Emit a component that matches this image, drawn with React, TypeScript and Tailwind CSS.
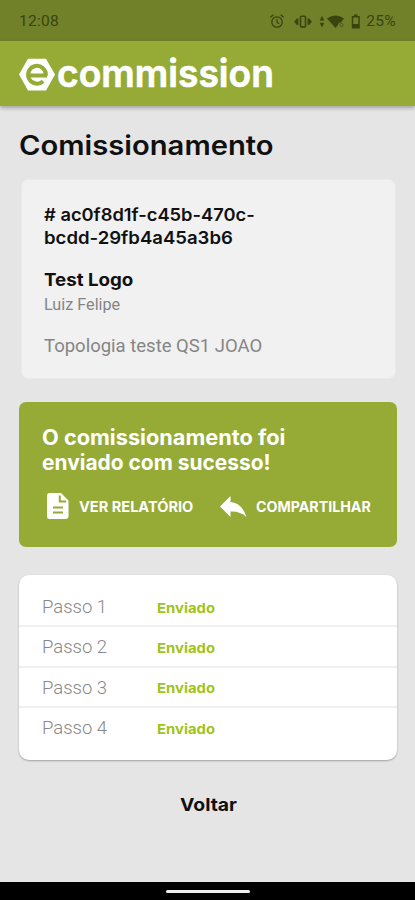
import React from 'react';

const steps = ['Passo 1', 'Passo 2', 'Passo 3', 'Passo 4'];

function StatusBar() {
  return (
    <div className="flex h-[41px] items-center bg-[#70812a] pl-[19px] pr-[19px] pt-[2px] text-[#39440f]">
      <span className="text-[15.5px] leading-none tracking-[0.3px]">12:08</span>
      <svg className="ml-auto" width="104" height="18" viewBox="0 0 104 18" fill="none" stroke="currentColor">
        <circle cx="8" cy="9" r="5.2" strokeWidth="1.3" />
        <path d="M8 6v3.3l2.3 1.4M1.4 4.3l3-2.6M14.6 4.3l-3-2.600" strokeWidth="1.2" />
        <rect x="31.5" y="3.3" width="5" height="10.6" rx="1" strokeWidth="1.6" />
        <path d="M28.6 5.500v6.500M39.400 5.500v6.500" strokeWidth="1.6" />
        <path d="M28 5.500v6.500L25 8.750zM40 5.500v6.500L43 8.750z" fill="currentColor" stroke="none" />
        <path d="M51 7.300l2-4 2 4zM51 10l2 4 2-4z" fill="currentColor" strokeWidth=".4" />
        <path d="M58 5.500Q66.500 -.500 75 5.500L72 9.500Q69 9 69 12L66.500 15z" fill="currentColor" stroke="none" />
        <circle cx="72.500" cy="12" r="1.700" strokeWidth="1" opacity=".6" />
        <path d="M83.500 3.700h6.500v11h-6.500zM85 2.300h3.500" strokeWidth="1.500" />
        <path d="M84 11.500h5.500v3H84z" fill="currentColor" />
      </svg>
      <span className="ml-[-7px] text-[15.5px] leading-none tracking-[0.3px]">25%</span>
    </div>
  );
}

function Header() {
  return (
    <header className="h-[64.500px] bg-[#95ab36] pl-[19px] shadow-[0_2px_4px_rgba(0,0,0,0.3)]">
      <svg className="overflow-visible" width="264" height="64" viewBox="0 -9 264 64">
        <path d="M9 8.700h18L36 24.500 27 40.500H9L0 24.500z" fill="#fff" />
        <path d="M9.500 25.500h18.500M26.900 25.500a8.900 8.900 0 1 0-2.800 5.800" fill="none" stroke="#95ab36" strokeWidth="4" />
        <text x="38" y="36.500" textLength="217" lengthAdjust="spacingAndGlyphs" fill="#fff" stroke="#fff" strokeWidth=".7" className="text-[39px] font-semibold">commission</text>
      </svg>
    </header>
  );
}

export default function App() {
  return (
    <div className="flex h-[900px] w-[415px] flex-col overflow-hidden bg-[#e5e5e5] font-['Roboto',sans-serif]">
      <StatusBar />
      <div className="font-['Inter',sans-serif]"><Header /></div>
      <main className="flex flex-1 flex-col pl-[19px] pr-[18px] text-[#101010]">
        <h1 className="mt-[23px] h-[34px] origin-left scale-x-[1.102] whitespace-nowrap font-['Inter',sans-serif] text-[26.5px] leading-[33px] font-semibold">
          Comissionamento
        </h1>
        <section className="mr-[2px] ml-[3px] mt-[17.500px] h-[198px] rounded-[7px] bg-[#f1f1f1] pl-[22px] pt-[23px] shadow-[0_0_2px_rgba(255,255,255,0.8)]">
          <div className="font-['Inter',sans-serif] text-[17.5px] leading-[23px] font-semibold">
            <div><span className="inline-block origin-left scale-x-[1.045] whitespace-nowrap"># ac0f8d1f-c45b-470c-</span></div>
            <div><span className="inline-block origin-left scale-x-[1.06] whitespace-nowrap">bcdd-29fb4a45a3b6</span></div>
          </div>
          <div className="mt-[19px] font-['Inter',sans-serif] text-[17.5px] leading-[24px] font-bold"><span className="inline-block origin-left scale-x-[1.07]">Test Logo</span></div>
          <div className="mt-[3px] text-[16.2px] leading-[20px] text-[#858585]">Luiz Felipe</div>
          <div className="mt-[19.500px] text-[18.5px] leading-[22px] text-[#858585]">Topologia teste QS1 JOAO</div>
        </section>
        <section className="mt-[24px] h-[145px] rounded-[7px] bg-[#95ab36] pl-[23px] pt-[22.500px] font-['Inter',sans-serif] text-white">
          <div className="text-[21px] leading-[25.500px] font-bold">
            <div><span className="inline-block origin-left scale-x-[1.035] whitespace-nowrap">O comissionamento foi</span></div>
            <div><span className="inline-block origin-left scale-x-[0.997] whitespace-nowrap">enviado com sucesso!</span></div>
          </div>
          <div className="mt-[14.500px] flex h-[32px] items-center">
            <svg className="ml-[5px]" width="22" height="28" viewBox="0 0 22 28">
              <path d="M2.500 1H14l7.500 7.500V24a3 3 0 0 1-3 3h-16A2.500 2.500 0 0 1 0 24.500v-21A2.500 2.500 0 0 1 2.500 1z" fill="#fff" />
              <path d="M12.800 3.500v6h6.300M6 15.500h10M6 20.500h10" fill="none" stroke="#95ab36" strokeWidth="2" />
            </svg>
            <span className="ml-[10px] block w-[141px]"><span className="inline-block origin-left scale-x-[1.04] whitespace-nowrap text-[14px] font-bold">VER RELATÓRIO</span></span>
            <svg className="mt-[2px]" width="27" height="22" viewBox="0 0 27 22" fill="#fff">
              <path d="M0 10.500L10.500 0v6Q22 7 26.500 21Q20 15 10.500 15.500V21z" />
            </svg>
            <span className="mt-px ml-[9px] inline-block origin-left scale-x-[1.015] whitespace-nowrap text-[14px] font-bold">COMPARTILHAR</span>
          </div>
        </section>
        <section className="mt-[28px] h-[185px] rounded-[10px] bg-white pt-[12px] shadow-[0_1px_2px_rgba(0,0,0,0.3)]">
          {steps.map((step) => (
            <div key={step} className="flex h-[40.4px] items-center border-b-2 border-[#f0f0f0] pt-[3px] pl-[23px] last:border-transparent">
              <span className="w-[115px] text-[18.5px] font-light text-[#888]">{step}</span>
              <span className="inline-block origin-left scale-x-[1.1] font-['Inter',sans-serif] text-[13.5px] font-bold text-[#9fc418]">Enviado</span>
            </div>
          ))}
        </section>
        <button className="mt-[32px] scale-x-[1.075] self-center font-['Inter',sans-serif] text-[18px] leading-[26px] font-bold">Voltar</button>
      </main>
      <footer className="flex h-[18px] justify-center bg-black pt-[8px]">
        <div className="h-[3px] w-[84px] rounded-full bg-[#eee]" />
      </footer>
    </div>
  );
}
